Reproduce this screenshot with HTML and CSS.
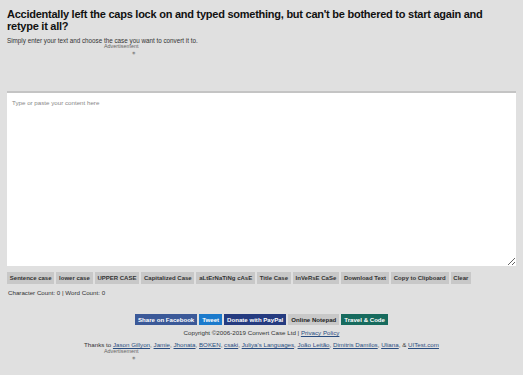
FILE: index.html
```html
<!DOCTYPE html>
<html lang="en">
<head>
    <meta charset="UTF-8">
    <meta name="viewport" content="width=device-width, initial-scale=1.0">
    <title>Convert Case</title>
    <link rel="stylesheet" href="styles.css">
</head>
<body>
    <div class="page">
        <h1>Accidentally left the caps lock on and typed something, but can't be bothered to start again and retype it all?</h1>
        <p class="intro">Simply enter your text and choose the case you want to convert it to.</p>

        <div class="ad ad-top">
            <span class="ad-label">Advertisement</span>
            <span class="ad-icon">&#9673;</span>
        </div>

        <textarea class="content" placeholder="Type or paste your content here"></textarea>

        <div class="tools">
            <button class="btn">Sentence case</button>
            <button class="btn">lower case</button>
            <button class="btn">UPPER CASE</button>
            <button class="btn">Capitalized Case</button>
            <button class="btn">aLtErNaTiNg cAsE</button>
            <button class="btn">Title Case</button>
            <button class="btn">InVeRsE CaSe</button>
            <button class="btn">Download Text</button>
            <button class="btn">Copy to Clipboard</button>
            <button class="btn">Clear</button>
        </div>

        <p class="count">Character Count: 0 | Word Count: 0</p>

        <footer class="footer">
            <div class="share">
                <a class="share-btn facebook" href="#">Share on Facebook</a>
                <a class="share-btn tweet" href="#">Tweet</a>
                <a class="share-btn paypal" href="#">Donate with PayPal</a>
                <a class="share-btn notepad" href="#">Online Notepad</a>
                <a class="share-btn travel" href="#">Travel &amp; Code</a>
            </div>
            <p class="copyright">Copyright &copy;2006-2019 Convert Case Ltd | <a href="#">Privacy Policy</a></p>
            <p class="thanks">Thanks to <a href="#">Jason Gillyon</a>, <a href="#">Jamie</a>, <a href="#">Jhonata</a>, <a href="#">BOKEN</a>, <a href="#">csaki</a>, <a href="#">Juliya's Languages</a>, <a href="#">João Leitão</a>, <a href="#">Dimitris Damilos</a>, <a href="#">Uliana</a>, &amp; <a href="#">UITest.com</a></p>
            <div class="ad ad-bottom">
                <span class="ad-label">Advertisement</span>
                <span class="ad-icon">&#9673;</span>
            </div>
        </footer>
    </div>
</body>
</html>
```

FILE: styles.css
```css
* {
    margin: 0;
    padding: 0;
    box-sizing: border-box;
}

body {
    font-family: 'Liberation Sans', Arial, sans-serif;
    background: #e0e0e0;
    color: #222;
    height: 100vh;
    overflow: hidden;
}

.page {
    padding: 7px 7px 0;
}

h1 {
    font-size: 11px;
    line-height: 12px;
    font-weight: bold;
    color: #111;
    letter-spacing: -0.25px;
    padding-top: 1px;
}

.intro {
    font-size: 6.3px;
    line-height: 7px;
    margin-top: 5px;
    color: #333;
}

.ad {
    display: flex;
    flex-direction: column;
    align-items: flex-end;
    width: 32px;
}

.ad-top {
    margin-left: 97px;
    margin-top: 0;
    height: 47px;
}

.ad-label {
    align-self: flex-start;
    font-size: 5.4px;
    line-height: 5px;
    color: #666;
}

.ad-icon {
    font-size: 4px;
    line-height: 5px;
    color: #888;
    margin-top: 1px;
    margin-right: 1px;
}

.content {
    display: block;
    width: 100%;
    height: 175px;
    border: none;
    border-top: 2px solid #c4c4c4;
    background: #fff;
    padding: 6px 5px;
    font-family: inherit;
    font-size: 6.2px;
    resize: vertical;
    outline: none;
}

.content::placeholder {
    color: #888;
}

.tools {
    display: flex;
    gap: 2px;
    margin-top: 6px;
}

.btn {
    font-family: inherit;
    font-size: 6px;
    font-weight: bold;
    color: #333;
    background: #c8c8c8;
    border: none;
    height: 12px;
    padding: 0 2.8px;
}

.count {
    font-size: 6.2px;
    line-height: 7px;
    margin-top: 5px;
    margin-left: 1px;
    color: #333;
}

.footer {
    text-align: center;
    margin-top: 18px;
}

.share {
    display: flex;
    justify-content: center;
    gap: 2px;
}

.share-btn {
    display: block;
    height: 11px;
    line-height: 11px;
    padding: 0 3px;
    font-size: 6.1px;
    font-weight: bold;
    color: #fff;
    text-decoration: none;
}

.facebook { background: #3b5998; }
.tweet { background: #1b7acc; }
.paypal { background: #253b80; }
.notepad { background: #c8c8c8; color: #222; }
.travel { background: #176b5e; }

.copyright,
.thanks {
    font-size: 6.2px;
    line-height: 7px;
    color: #333;
}

.copyright {
    margin-top: 4px;
}

.thanks {
    margin-top: 5px;
}

.footer a:not(.share-btn) {
    color: #2a4d80;
}

.ad-bottom {
    margin-left: 97px;
    margin-top: 1px;
}
```
